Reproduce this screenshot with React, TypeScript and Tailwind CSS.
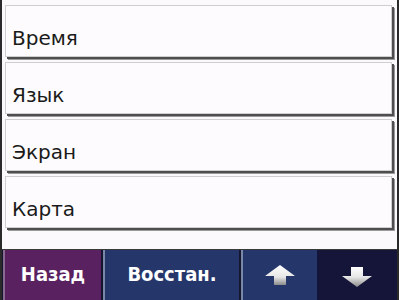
const items = ["Время", "Язык", "Экран", "Карта"];

function UpArrow() {
	return (
		<svg width="30" height="20" viewBox="0 0 30 20">
			<defs>
				<linearGradient id="ga" x1="0" y1="0" x2="0" y2="1">
					<stop offset="0" stopColor="#ffffff" />
					<stop offset="0.6" stopColor="#e6e6e6" />
					<stop offset="1" stopColor="#8a8a8a" />
				</linearGradient>
			</defs>
			<path d="M15 0 L30 11 L21 11 L21 20 L9 20 L9 11 L0 11 Z" fill="url(#ga)" />
		</svg>
	);
}

function DownArrow() {
	return (
		<svg width="30" height="20" viewBox="0 0 30 20">
			<defs>
				<linearGradient id="gb" x1="0" y1="0" x2="0" y2="1">
					<stop offset="0" stopColor="#ffffff" />
					<stop offset="0.5" stopColor="#e6e6e6" />
					<stop offset="1" stopColor="#8a8a8a" />
				</linearGradient>
			</defs>
			<path d="M9 0 L21 0 L21 9 L30 9 L15 20 L0 9 L9 9 Z" fill="url(#gb)" />
		</svg>
	);
}

export default function App() {
	return (
		<div
			className="w-[399px] h-[300px] flex flex-col bg-[#fbf9fb] border-l-2 border-r-2 border-[#2a2a2a] overflow-hidden"
			style={{ fontFamily: '"DejaVu Sans", sans-serif' }}>
			<div className="flex-1 flex flex-col gap-[5px] pt-[5px] pl-[3px] pr-[5px]">
				{items.map((label) => (
					<div
						key={label}
						className="h-[52px] bg-[#fdfbfd] border border-[#cfcfcf] shadow-[2px_2px_0_#4e4e4e,3px_3px_0_#9a9a9a] flex items-start pl-[6px] pt-[22px]">
						<span className="text-[20px] leading-[20px] text-[#1a1a1a]">{label}</span>
					</div>
				))}
			</div>
			<div
				className="h-[51px] flex bg-[#15152f] border-t border-[#3a3a3a]"
				style={{ fontFamily: '"DejaVu Sans Condensed", "DejaVu Sans", sans-serif' }}>
				<button className="ml-px w-[98px] bg-[#5a2160] border-l-2 border-[#8a6a90] text-white font-bold text-[20px] flex items-center justify-center pb-[2px]">
					Назад
				</button>
				<button className="ml-[2px] w-[136px] bg-[#25376a] border-l-2 border-[#7a88a8] text-white font-bold text-[20px] flex items-center justify-center pb-[2px]">
					Восстан.
				</button>
				<div className="ml-[2px] w-[76px] bg-[#25376a] border-l-2 border-[#7a88a8] flex items-center justify-center">
					<UpArrow />
				</div>
				<div className="flex-1 bg-[#15153a] flex items-center justify-center pt-[4px]">
					<DownArrow />
				</div>
			</div>
		</div>
	);
}
